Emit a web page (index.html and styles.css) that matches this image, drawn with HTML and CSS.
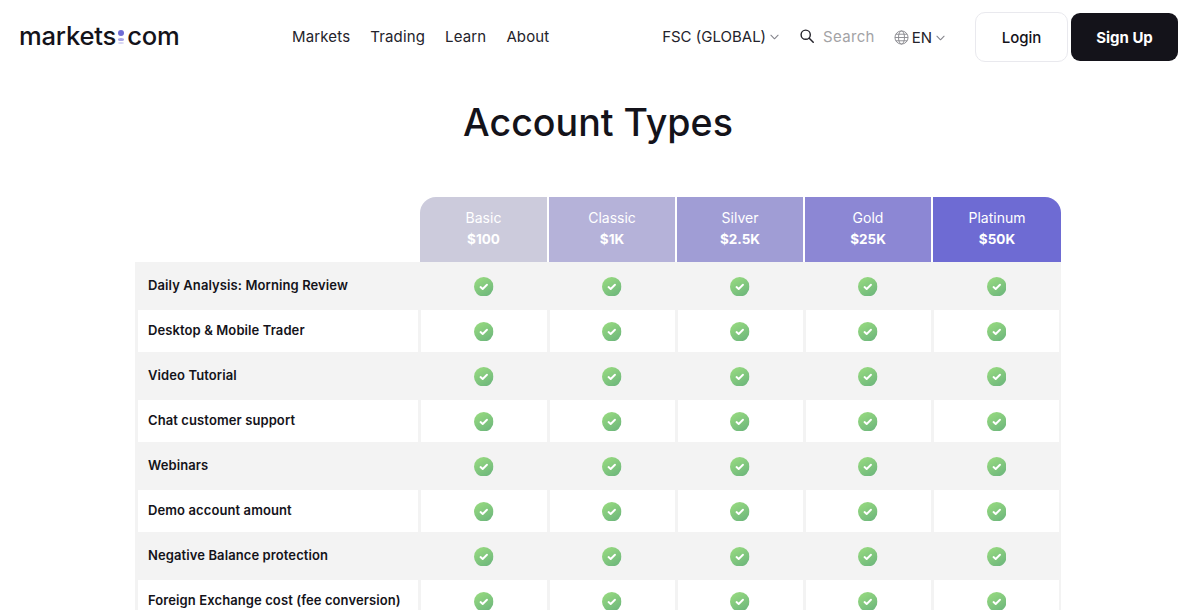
FILE: index.html
```html
<!DOCTYPE html>
<html lang="en">
<head>
<meta charset="utf-8">
<title>Account Types</title>
<link rel="stylesheet" href="styles.css">
</head>
<body>
<svg class="sprite" width="0" height="0" aria-hidden="true">
  <defs>
    <linearGradient id="okgrad" x1="0.2" y1="0" x2="0.8" y2="1">
      <stop offset="0" stop-color="#97da80"/>
      <stop offset="1" stop-color="#6db67c"/>
    </linearGradient>
    <symbol id="ok" viewBox="0 0 20 20">
      <circle cx="10" cy="10" r="10" fill="url(#okgrad)"/>
      <path d="M6.700 10.300l2.200 2 4.400-4.300" fill="none" stroke="#fff" stroke-width="2" stroke-linecap="round" stroke-linejoin="round"/>
    </symbol>
    <symbol id="chev" viewBox="0 0 10 6">
      <path d="M1 1l4 4 4-4" fill="none" stroke="#85858c" stroke-width="1.2" stroke-linecap="round" stroke-linejoin="round"/>
    </symbol>
  </defs>
</svg>
<header class="topbar">
  <a class="logo">markets<span class="logo-dots"><i class="d1"></i><i class="d2"></i><i class="d3"></i></span>com</a>
  <nav class="mainnav">
    <a>Markets</a><a>Trading</a><a>Learn</a><a>About</a>
  </nav>
  <div class="tools">
    <a class="region">FSC (GLOBAL)<svg class="chev"><use href="#chev"/></svg></a>
    <a class="search">
      <svg class="search-ico" viewBox="0 0 14 14"><circle cx="5.7" cy="5.7" r="4.6" fill="none" stroke="#24232b" stroke-width="1.4"/><path d="M9.2 9.2l4 4" stroke="#24232b" stroke-width="1.5" stroke-linecap="round"/></svg>
      <span>Search</span>
    </a>
    <a class="lang">
      <svg class="globe" viewBox="0 0 16 16" fill="none" stroke="#8b8b90" stroke-width="1"><circle cx="8" cy="8" r="7"/><ellipse cx="8" cy="8" rx="3.2" ry="7"/><path d="M1 8h14M2 4.5h12M2 11.500h12"/></svg>
      EN<svg class="chev"><use href="#chev"/></svg>
    </a>
    <a class="btn btn-login">Login</a>
    <a class="btn btn-signup">Sign Up</a>
  </div>
</header>
<main class="page">
  <h1 class="title">Account Types</h1>
  <div class="plans">
    <div class="plan plan-basic"><span>Basic</span><b>$100</b></div>
    <div class="plan plan-classic"><span>Classic</span><b>$1K</b></div>
    <div class="plan plan-silver"><span>Silver</span><b>$2.5K</b></div>
    <div class="plan plan-gold"><span>Gold</span><b>$25K</b></div>
    <div class="plan plan-platinum"><span>Platinum</span><b>$50K</b></div>
  </div>
  <div class="features">
    <div class="row"><div class="label">Daily Analysis: Morning Review</div><div class="cell"><svg class="ok"><use href="#ok"/></svg></div><div class="cell"><svg class="ok"><use href="#ok"/></svg></div><div class="cell"><svg class="ok"><use href="#ok"/></svg></div><div class="cell"><svg class="ok"><use href="#ok"/></svg></div><div class="cell"><svg class="ok"><use href="#ok"/></svg></div></div>
    <div class="row"><div class="label">Desktop &amp; Mobile Trader</div><div class="cell"><svg class="ok"><use href="#ok"/></svg></div><div class="cell"><svg class="ok"><use href="#ok"/></svg></div><div class="cell"><svg class="ok"><use href="#ok"/></svg></div><div class="cell"><svg class="ok"><use href="#ok"/></svg></div><div class="cell"><svg class="ok"><use href="#ok"/></svg></div></div>
    <div class="row"><div class="label">Video Tutorial</div><div class="cell"><svg class="ok"><use href="#ok"/></svg></div><div class="cell"><svg class="ok"><use href="#ok"/></svg></div><div class="cell"><svg class="ok"><use href="#ok"/></svg></div><div class="cell"><svg class="ok"><use href="#ok"/></svg></div><div class="cell"><svg class="ok"><use href="#ok"/></svg></div></div>
    <div class="row"><div class="label">Chat customer support</div><div class="cell"><svg class="ok"><use href="#ok"/></svg></div><div class="cell"><svg class="ok"><use href="#ok"/></svg></div><div class="cell"><svg class="ok"><use href="#ok"/></svg></div><div class="cell"><svg class="ok"><use href="#ok"/></svg></div><div class="cell"><svg class="ok"><use href="#ok"/></svg></div></div>
    <div class="row"><div class="label">Webinars</div><div class="cell"><svg class="ok"><use href="#ok"/></svg></div><div class="cell"><svg class="ok"><use href="#ok"/></svg></div><div class="cell"><svg class="ok"><use href="#ok"/></svg></div><div class="cell"><svg class="ok"><use href="#ok"/></svg></div><div class="cell"><svg class="ok"><use href="#ok"/></svg></div></div>
    <div class="row"><div class="label">Demo account amount</div><div class="cell"><svg class="ok"><use href="#ok"/></svg></div><div class="cell"><svg class="ok"><use href="#ok"/></svg></div><div class="cell"><svg class="ok"><use href="#ok"/></svg></div><div class="cell"><svg class="ok"><use href="#ok"/></svg></div><div class="cell"><svg class="ok"><use href="#ok"/></svg></div></div>
    <div class="row"><div class="label">Negative Balance protection</div><div class="cell"><svg class="ok"><use href="#ok"/></svg></div><div class="cell"><svg class="ok"><use href="#ok"/></svg></div><div class="cell"><svg class="ok"><use href="#ok"/></svg></div><div class="cell"><svg class="ok"><use href="#ok"/></svg></div><div class="cell"><svg class="ok"><use href="#ok"/></svg></div></div>
    <div class="row"><div class="label">Foreign Exchange cost (fee conversion)</div><div class="cell"><svg class="ok"><use href="#ok"/></svg></div><div class="cell"><svg class="ok"><use href="#ok"/></svg></div><div class="cell"><svg class="ok"><use href="#ok"/></svg></div><div class="cell"><svg class="ok"><use href="#ok"/></svg></div><div class="cell"><svg class="ok"><use href="#ok"/></svg></div></div>
  </div>
</main>
</body>
</html>
```
FILE: styles.css
```css
* { box-sizing: border-box; }
html, body { margin: 0; height: 610px; overflow: hidden; background: #fff; }
body { font-family: "Inter", "Liberation Sans", sans-serif; color: #14131a; }
.sprite { position: absolute; }

.topbar { display: flex; align-items: center; height: 74px; padding: 0 8px 0 19px; }
.logo { display: flex; align-items: center; width: 273px; padding-bottom: 4px; font-size: 25.6px; font-weight: 500; letter-spacing: -0.2px; }
.logo-dots { display: flex; flex-direction: column; align-items: center; gap: 1.5px; margin: 4px 3px 0 2px; }
.logo-dots i { display: block; border-radius: 50%; background: #6f6cd5; }
.logo-dots .d1 { width: 6px; height: 6px; }
.logo-dots .d2 { width: 6px; height: 3px; background: #a9a6e6; }
.logo-dots .d3 { width: 6px; height: 2px; background: #d5d4f3; }

.mainnav { display: flex; gap: 20px; padding-bottom: 2px; font-size: 15px; letter-spacing: 0.15px; color: #24232b; }
.tools { display: flex; align-items: center; margin-left: auto; font-size: 15px; }
.region { display: flex; align-items: center; padding-bottom: 2px; color: #24232b; }
.chev { width: 9px; height: 6px; margin-left: 4px; margin-top: 2px; }
.search { display: flex; align-items: center; margin-left: 21px; padding-bottom: 2px; color: #a3a3a6; letter-spacing: 0.3px; }
.search-ico { width: 14px; height: 14px; margin-right: 9px; }
.lang { display: flex; align-items: center; margin-left: 19px; color: #24232b; }
.globe { width: 15px; height: 15px; margin-right: 3px; }
.btn { display: flex; align-items: center; justify-content: center; font-size: 15px; }
.btn-login { width: 93px; height: 50px; margin-left: 30px; border: 1px solid #e9e9ee; border-radius: 10px; font-weight: 500; }
.btn-signup { width: 107px; height: 48px; margin-left: 3px; border-radius: 9px; background: #14131a; color: #fff; font-weight: 700; }

.page { padding-left: 10px; }
.title { margin: 24px 0 49px; height: 50px; font-size: 37.6px; line-height: 50px; font-weight: 500; text-align: center; }
.plans { display: grid; grid-template-columns: 127px 126px 126px 126px 128px; column-gap: 2px; width: 926px; height: 65px; margin: 0 auto; padding-left: 285px; color: #fff; }
.plan { display: flex; flex-direction: column; align-items: center; justify-content: center; gap: 3px; padding-bottom: 2px; font-size: 14px; line-height: 18px; }
.plan b { font-size: 13.5px; font-weight: 700; }
.plan-basic { background: #cccbdc; border-top-left-radius: 16px; }
.plan-classic { background: #b5b2d9; }
.plan-silver { background: #a09dd5; }
.plan-gold { background: #8c87d4; }
.plan-platinum { background: #6e6bd3; border-top-right-radius: 16px; }

.features { width: 926px; margin: 0 auto; background: #f3f3f3; }
.row { display: grid; grid-template-columns: 280px 126px repeat(4, 125px); column-gap: 3px; height: 45px; padding: 3px 2px 0 3px; }
.row:nth-child(even) .label, .row:nth-child(even) .cell { background: #fff; }
.label { display: flex; align-items: center; padding: 0 0 2px 10px; font-size: 13px; font-weight: 600; letter-spacing: 0.1px; }
.cell { display: flex; align-items: center; justify-content: center; padding-top: 1px; }
.cell:nth-child(n+3):nth-child(-n+5) { padding-right: 1px; }
.ok { width: 19.5px; height: 19.5px; display: block; }
```
